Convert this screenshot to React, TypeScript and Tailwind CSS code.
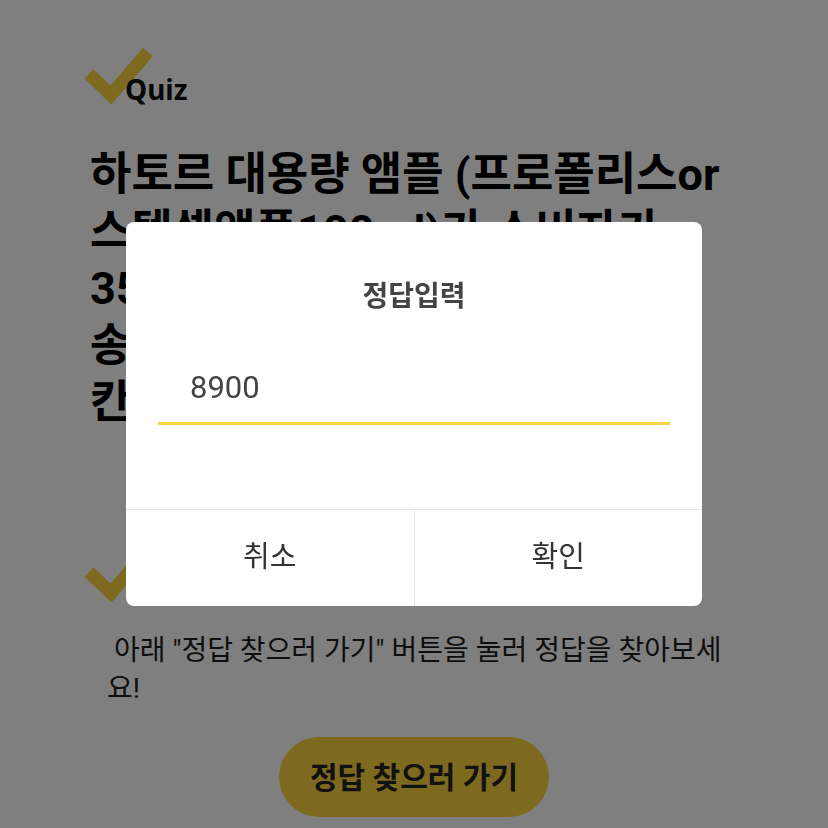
import React from "react";

const FONT = 'Roboto, "Noto Sans CJK KR", "Noto Sans", sans-serif';

function Check() {
  return (
    <svg width="80" height="70" viewBox="0 0 80 70" className="shrink-0">
      <polyline
        points="9,34 31,55 68,12"
        fill="none"
        stroke="#fad43f"
        strokeWidth="13"
        strokeLinejoin="miter"
        strokeLinecap="butt"
      />
    </svg>
  );
}

export default function App() {
  return (
    <div className="min-h-screen bg-white text-[#111]" style={{ fontFamily: FONT }}>
      <div className="px-[80px] pt-[40px] pb-[40px]">
        <div className="flex items-start h-[70px]">
          <Check />
          <span
            className="ml-[-35px] mt-[35px] text-[28px] font-bold leading-none text-[#111]"
            style={{ fontFamily: '"Noto Sans", sans-serif' }}
          >
            Quiz
          </span>
        </div>

        <h1 className="mt-[36px] pl-[10px] text-[45px] leading-[57px] font-bold text-black">
          하토르 대용량 앰플 (프로폴리스or
          <br />
          스템셀앰플100ml)가 소비자가
          <br />
          35,000원인데 오늘만 무료배
          <br />
          송까지! 할인가는 얼마
          <br />
          칸에 입력하세요
        </h1>

        <div className="mt-[107px] flex items-start h-[70px]">
          <Check />
          <span
            className="ml-[-35px] mt-[35px] text-[28px] font-bold leading-none text-[#111]"
            style={{ fontFamily: '"Noto Sans", sans-serif' }}
          >
            Hint
          </span>
        </div>

        <p className="mt-[24px] pl-[27px] pr-[20px] text-[28px] leading-[38px] text-[#1c1c1c]">
          &nbsp;아래 "정답 찾으러 가기" 버튼을 눌러 정답을 찾아보세요!
        </p>

        <div className="mt-[29px] flex justify-center">
          <button className="w-[270px] h-[80px] rounded-full bg-[#fad43f] text-[30px] font-bold text-[#222]">
            정답 찾으러 가기
          </button>
        </div>
      </div>

      <div className="fixed inset-0 bg-black/50 flex items-center justify-center">
        <div className="w-[576px] h-[384px] bg-white rounded-[8px] flex flex-col overflow-hidden">
          <div className="pt-[56px] text-center text-[28px] leading-[38px] font-bold text-[#444]">
            정답입력
          </div>
          <div className="mx-[32px] mt-[38px] border-b-[3px] border-[#f5d547]">
            <input
              readOnly
              value="8900"
              className="w-full h-[68px] px-[32px] pb-[2px] text-[31px] text-[#444] bg-transparent outline-none"
              style={{ fontFamily: FONT }}
            />
          </div>
          <div className="mt-auto h-[97px] border-t border-[#e6e6e6] flex">
            <button className="flex-1 text-[29px] text-[#333] border-r border-[#e6e6e6]">취소</button>
            <button className="flex-1 text-[29px] text-[#333]">확인</button>
          </div>
        </div>
      </div>
    </div>
  );
}
